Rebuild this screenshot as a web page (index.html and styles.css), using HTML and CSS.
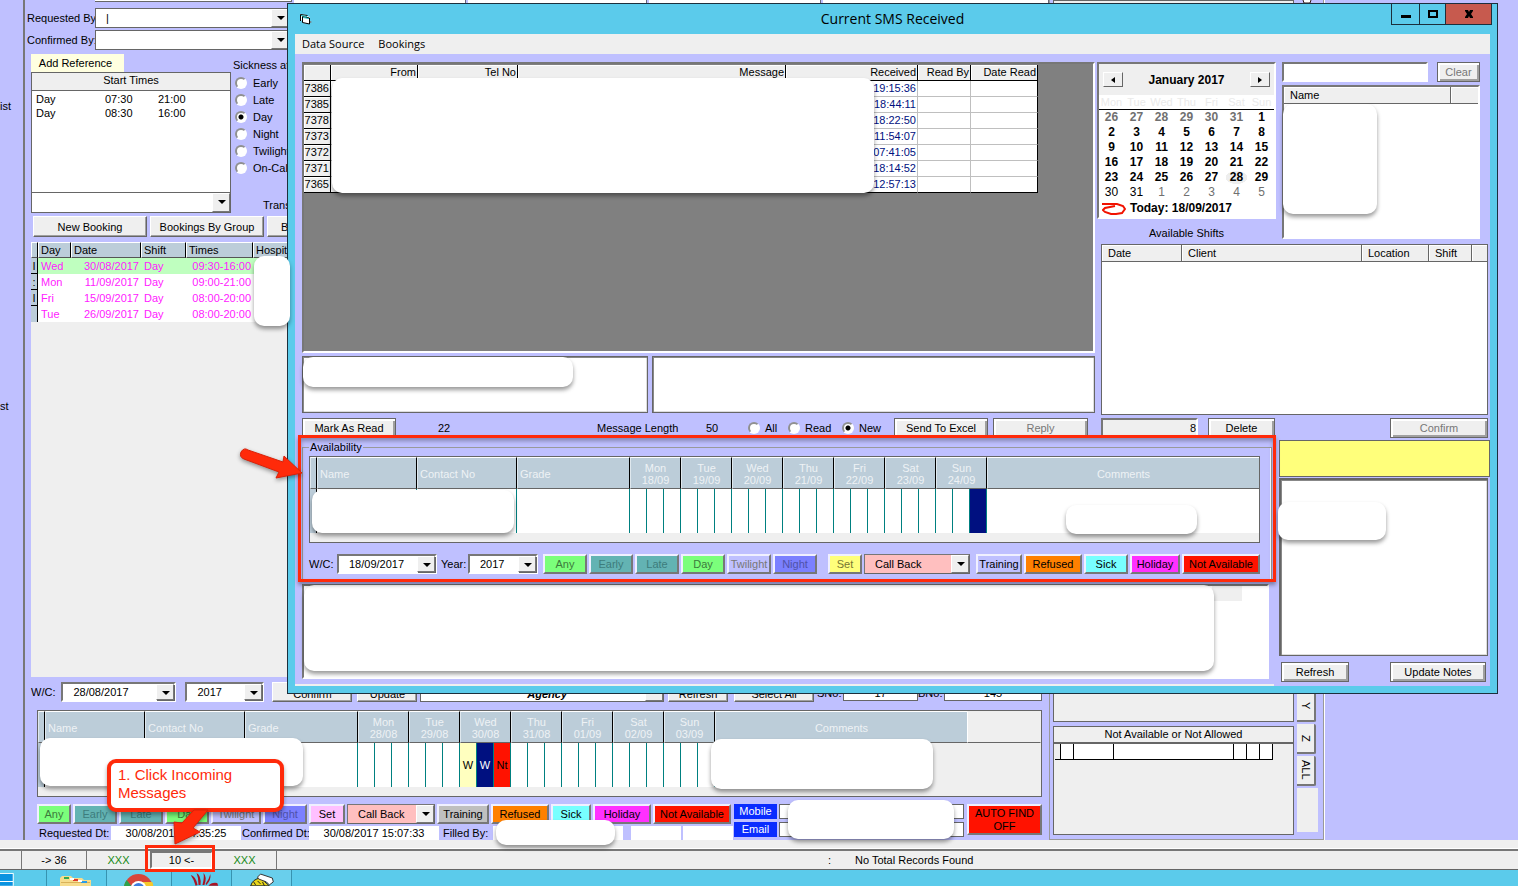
FILE: index.html
```html
<!DOCTYPE html>
<html lang="en">
<head>
<meta charset="utf-8">
<title>Current SMS Received</title>
<link rel="stylesheet" href="styles.css">
</head>
<body>
<div class="screen">
  <div class="workspace">
    <aside class="rail"><span class="rail-a">ist</span><span class="rail-b">st</span></aside>

    <main class="main">
      <div class="peek"><i class="peek-combo"></i><i class="pk1"></i><i class="pk2"></i><i class="pk1"></i><i class="pk3"></i></div>
      <div class="requests">
        <div class="field"><label for="reqby">Requested By</label><span class="combo"><select id="reqby"><option>|</option></select></span></div>
        <div class="field"><label for="confby">Confirmed By:</label><span class="combo"><select id="confby"><option></option></select></span></div>
        <div class="booking-setup">
          <div class="starts">
            <button class="add-ref">Add Reference</button>
            <div class="start-box">
              <div class="start-title">Start Times</div>
              <table class="start-list">
                <tr><td>Day</td><td>07:30</td><td>21:00</td></tr>
                <tr><td>Day</td><td>08:30</td><td>16:00</td></tr>
              </table>
              <span class="combo combo-flat"><select aria-label="Start time"><option></option></select></span>
            </div>
          </div>
          <div class="sickness">
            <span>Sickness at</span>
            <label><input type="radio" name="sick">Early</label>
            <label><input type="radio" name="sick">Late</label>
            <label><input type="radio" name="sick" checked>Day</label>
            <label><input type="radio" name="sick">Night</label>
            <label><input type="radio" name="sick">Twilight</label>
            <label><input type="radio" name="sick">On-Call</label>
            <span class="trans">Trans</span>
          </div>
        </div>
        <div class="booking-buttons">
          <button class="btn">New Booking</button><button class="btn">Bookings By Group</button><button class="btn lead">B</button>
        </div>
      </div>

      <div class="bookings">
        <table>
          <thead><tr><th class="c-mark"></th><th class="c-day">Day</th><th class="c-date">Date</th><th class="c-shift">Shift</th><th class="c-times">Times</th><th class="c-hosp">Hospit</th></tr></thead>
          <tbody>
            <tr class="current"><th>I</th><td>Wed</td><td class="num">30/08/2017</td><td>Day</td><td class="num">09:30-16:00</td><td></td></tr>
            <tr><th>:</th><td>Mon</td><td class="num">11/09/2017</td><td>Day</td><td class="num">09:00-21:00</td><td></td></tr>
            <tr><th>I</th><td>Fri</td><td class="num">15/09/2017</td><td>Day</td><td class="num">08:00-20:00</td><td></td></tr>
            <tr><th></th><td>Tue</td><td class="num">26/09/2017</td><td>Day</td><td class="num">08:00-20:00</td><td></td></tr>
          </tbody>
        </table>
      </div>

      <div class="filter-row">
        <label for="wc1">W/C:</label>
        <span class="combo combo-wc"><select id="wc1"><option>28/08/2017</option></select></span>
        <span class="combo combo-yr"><select aria-label="Year"><option>2017</option></select></span>
        <button class="btn w-80">Confirm</button>
        <button class="btn w-60">Update</button>
        <span class="combo combo-agency"><select aria-label="Agency"><option>Agency</option></select></span>
        <button class="btn w-60">Refresh</button>
        <button class="btn w-80">Select All</button>
        <label for="sno">SNo:</label><input class="flat-input" id="sno" value="17">
        <label for="bno">BNo:</label><input class="flat-input wide" id="bno" value="145">
      </div>

      <div class="avail avail-main">
        <table>
          <colgroup><col class="k-mark"><col class="k-name"><col class="k-name"><col class="k-grade"><col class="k-slot" span="21"><col class="k-comm"><col></colgroup>
          <thead><tr><th></th><th class="left">Name</th><th class="left">Contact No</th><th class="left">Grade</th>
            <th colspan="3">Mon<br>28/08</th><th colspan="3">Tue<br>29/08</th><th colspan="3">Wed<br>30/08</th><th colspan="3">Thu<br>31/08</th><th colspan="3">Fri<br>01/09</th><th colspan="3">Sat<br>02/09</th><th colspan="3">Sun<br>03/09</th><th class="comm">Comments</th><th class="blank"></th></tr></thead>
          <tbody><tr><td class="mark"></td><td></td><td></td><td></td>
            <td></td><td></td><td></td><td></td><td></td><td></td><td class="s-cream">W</td><td class="s-navy">W</td><td class="s-red">Nt</td><td></td><td></td><td></td><td></td><td></td><td></td><td></td><td></td><td></td><td></td><td></td><td></td><td class="off"></td><td class="off"></td></tr></tbody>
        </table>
        <div class="patch p-main-name"></div>
        <div class="patch p-main-comm"></div>
      </div>

      <div class="bottom">
        <div class="bottom-left">
          <div class="codes">
            <button class="code green w-34">Any</button><button class="code teal w-44">Early</button><button class="code teal w-44">Late</button><button class="code green w-44">Day</button><button class="code lilac w-50">Twilight</button><button class="code blue w-44">Night</button>
            <button class="code pink w-36">Set</button><span class="combo combo-pink"><select aria-label="Status"><option>Call Back</option></select></span>
            <button class="code grey w-52">Training</button><button class="code orange w-58">Refused</button><button class="code cyan w-40">Sick</button><button class="code magenta w-58">Holiday</button><button class="code red w-78">Not Available</button>
          </div>
          <div class="stamps">
            <span class="l1">Requested Dt:</span><output>30/08/2017 14:35:25</output><span class="l2">Confirmed Dt:</span><output>30/08/2017 15:07:33</output><span class="l3">Filled By:</span><output></output><output class="sm"></output><output class="sm"></output>
          </div>
          <div class="patch p-filled"></div>
        </div>
        <div class="contact">
          <label for="mob">Mobile</label><input id="mob"><label for="eml">Email</label><input id="eml">
          <div class="patch p-contact"></div>
        </div>
        <button class="code red autofind">AUTO FIND<br>OFF</button>
      </div>
    </main>

    <aside class="dock">
      <div class="dock-peek"></div>
      <div class="dock-panels">
        <div class="dock-top"></div>
        <div class="dock-na">
          <div class="dock-title">Not Available or Not Allowed</div>
          <table><tr><td class="n1"></td><td class="n2"></td><td class="n3"></td><td class="n4"></td><td class="n2"></td><td class="n2"></td><td class="n2"></td></tr></table>
        </div>
      </div>
      <div class="tabs">
        <svg class="tab-icon" viewBox="0 0 12 4" aria-hidden="true"><path d="M2 0 L3 3 L9 3 L10 0" fill="#fff" stroke="#301818"/></svg>
        <span class="tab-space"></span>
        <button>Y</button><button>Z</button><button>ALL</button><span class="tab-rest"></span>
      </div>
    </aside>
  </div>

  <div class="sill"></div>
  <footer class="statusbar">
    <span class="st0"></span><span class="st1">-&gt; 36</span><span class="st2 ok">XXX</span><button class="st3">10 &lt;-</button><span class="st2 ok">XXX</span><span class="st4"></span><span class="colon">:</span><span class="total">No Total Records Found</span>
  </footer>
  <nav class="taskbar">
    <button class="start" aria-label="Start"><svg viewBox="0 0 47 16"><path d="M0 3h14v13H0z" fill="#fff"/><path d="M0 4h13v7H0zM0 12h13v4H0z" fill="#0a93e0"/></svg></button>
    <button aria-label="Files"><svg viewBox="0 0 59 16"><path d="M13 8l2-2h9l2 2h9l2 2h7v6H13z" fill="#f6dc8c"/><path d="M14 12h29v1H14z" fill="#d9b25a"/><path d="M17 7h5v2h-5z" fill="#32a852"/><path d="M26 9h5v2h-5z" fill="#e23b2e"/><path d="M34 11h6v2h-6z" fill="#2a9be8"/><path d="M23 8h4v2h-4zM31 10h4v2h-4z" fill="#fff"/></svg></button>
    <button class="lit" aria-label="Browser"><svg viewBox="0 0 65 16"><circle cx="32" cy="19" r="15" fill="#d8453a"/><path d="M17 19a15 15 0 0 1 3-9l7 9z" fill="#2ca24c"/><path d="M33 12h13a15 15 0 0 1 1 7H33z" fill="#f5c92c"/><circle cx="32" cy="19" r="8" fill="#fff"/><circle cx="32" cy="19" r="6" fill="#3d7de0"/></svg></button>
    <button aria-label="Messaging"><svg viewBox="0 0 60 16"><g fill="#a81424"><path d="M19 5q5 1 7 10l-2 1q-2-7-5-11zM25 3q5 3 4 12h-2q0-7-2-12zM32 3q4 4 1 12h-2q2-7 1-12zM39 4q1 6-4 11l-1-1q4-5 5-10zM46 13q-6-1-9 3h10z"/></g></svg></button>
    <button class="lit" aria-label="Mascot"><svg viewBox="0 0 60 16"><path d="M19 16q2-7 10-8l9 8z" fill="#e8d61c" stroke="#222"/><path d="M26 7l3-3 12 4 1 4-4 3-3-3-8-3z" fill="#fff" stroke="#333"/><path d="M26 11l3 3M22 12l2 3M31 12l2 4" stroke="#222"/></svg></button>
  </nav>

  <section class="window" aria-label="Current SMS Received">
    <header class="titlebar">
      <svg class="app-icon" viewBox="0 0 13 12"><path d="M1 1l7 1v1l3 1v7l-7-1V8L1 7z" fill="#fff"/><path d="M1.500 8V1.500l7 1M3.500 9.500v-6l7 1.500v6l-7-1.500" fill="none" stroke="#000"/><path d="M2 2.500l6 1M4 4.500l6 1" stroke="#18b8b8"/><path d="M11 8l2 1-2 1z" fill="#777"/></svg>
      <h1>Current SMS Received</h1>
      <div class="win-buttons">
        <button aria-label="Minimize"><svg viewBox="0 0 12 12"><path d="M1 7h10v3H1z"/></svg></button>
        <button class="max" aria-label="Maximize"><svg viewBox="0 0 12 12"><path d="M1 2h10v8H1zM3 4v4h6V4z" fill-rule="evenodd"/></svg></button>
        <button class="close" aria-label="Close"><svg viewBox="0 0 12 12"><path d="M2 2h3l1 2 1-2h3v1L8 6l2 3v1H7L6 8l-1 2H2V9l2-3-2-3z"/></svg></button>
      </div>
    </header>
    <div class="client">
      <div class="menubar"><button>Data Source</button><button>Bookings</button></div>
      <div class="upper">
        <div class="messages">
          <div class="sms-grid">
            <table>
              <thead><tr><th class="m-id"></th><th class="m-from">From</th><th class="m-tel">Tel No</th><th class="m-msg">Message</th><th class="m-rec">Received</th><th class="m-by">Read By</th><th class="m-date">Date Read</th></tr></thead>
              <tbody>
                <tr><th>7386</th><td></td><td></td><td></td><td>19:15:36</td><td></td><td></td></tr>
                <tr><th>7385</th><td></td><td></td><td></td><td>18:44:11</td><td></td><td></td></tr>
                <tr><th>7378</th><td></td><td></td><td></td><td>18:22:50</td><td></td><td></td></tr>
                <tr><th>7373</th><td></td><td></td><td></td><td>11:54:07</td><td></td><td></td></tr>
                <tr><th>7372</th><td></td><td></td><td></td><td>07:41:05</td><td></td><td></td></tr>
                <tr><th>7371</th><td></td><td></td><td></td><td>18:14:52</td><td></td><td></td></tr>
                <tr><th>7365</th><td></td><td></td><td></td><td>12:57:13</td><td></td><td></td></tr>
              </tbody>
            </table>
            <div class="patch p-sms"></div>
          </div>
          <div class="texts">
            <div class="text-a"><textarea aria-label="Message"></textarea><div class="patch p-text"></div></div>
            <div class="text-b"><textarea aria-label="Reply text"></textarea></div>
          </div>
          <div class="msg-actions">
            <button class="btn">Mark As Read</button><span class="count">22</span><span>Message Length</span><span>50</span>
            <label><input type="radio" name="show">All</label><label><input type="radio" name="show">Read</label><label><input type="radio" name="show" checked>New</label>
            <button class="btn">Send To Excel</button><button class="btn reply" disabled>Reply</button>
          </div>
        </div>

        <div class="side">
          <div class="side-top">
            <div class="cal-col">
              <div class="calendar">
                <div class="cal-head"><button aria-label="Previous month"><svg viewBox="0 0 8 8"><path d="M6 1v6L2 4z"/></svg></button><span>January 2017</span><button aria-label="Next month"><svg viewBox="0 0 8 8"><path d="M2 1v6l4-3z"/></svg></button></div>
                <table>
                  <thead><tr><th>Mon</th><th>Tue</th><th>Wed</th><th>Thu</th><th>Fri</th><th>Sat</th><th>Sun</th></tr></thead>
                  <tbody>
                    <tr><td class="dim">26</td><td class="dim">27</td><td class="dim">28</td><td class="dim">29</td><td class="dim">30</td><td class="dim">31</td><td>1</td></tr>
                    <tr><td>2</td><td>3</td><td>4</td><td>5</td><td>6</td><td>7</td><td>8</td></tr>
                    <tr><td>9</td><td>10</td><td>11</td><td>12</td><td>13</td><td>14</td><td>15</td></tr>
                    <tr><td>16</td><td>17</td><td>18</td><td>19</td><td>20</td><td>21</td><td>22</td></tr>
                    <tr><td>23</td><td>24</td><td>25</td><td>26</td><td>27</td><td class="sel">28</td><td>29</td></tr>
                    <tr class="thin"><td>30</td><td>31</td><td class="dim">1</td><td class="dim">2</td><td class="dim">3</td><td class="dim">4</td><td class="dim">5</td></tr>
                  </tbody>
                </table>
                <div class="today"><svg viewBox="0 0 24 12"><path d="M0 1h15l6 2 2 3-3 4-6 1H9L3 9 1 7l2-2 5-1 5-1" fill="none" stroke="#f11200" stroke-width="2"/></svg>Today: 18/09/2017</div>
              </div>
              <div class="shifts-label">Available Shifts</div>
            </div>
            <div class="search">
              <div class="search-row"><input aria-label="Search name"><button class="btn" disabled>Clear</button></div>
              <div class="names"><div class="list-head"><span class="h-name">Name</span><span class="h-rest"></span></div><div class="patch p-names"></div></div>
            </div>
          </div>
          <div class="shifts"><div class="list-head"><span class="h-date">Date</span><span class="h-client">Client</span><span class="h-loc">Location</span><span class="h-shift">Shift</span><span class="h-end"></span></div></div>
          <div class="shift-actions"><input aria-label="Shift count" value="8" readonly><button class="btn">Delete</button><button class="btn confirm" disabled>Confirm</button></div>
        </div>
      </div>

      <div class="lower">
        <div class="lower-left">
          <fieldset>
            <legend>Availability</legend>
            <div class="avail">
              <table>
                <colgroup><col class="k-mark"><col class="k-name"><col class="k-name"><col class="k-grade"><col class="k-slot" span="21"><col></colgroup>
                <thead><tr><th></th><th class="left">Name</th><th class="left">Contact No</th><th class="left">Grade</th>
                  <th colspan="3">Mon<br>18/09</th><th colspan="3">Tue<br>19/09</th><th colspan="3">Wed<br>20/09</th><th colspan="3">Thu<br>21/09</th><th colspan="3">Fri<br>22/09</th><th colspan="3">Sat<br>23/09</th><th colspan="3">Sun<br>24/09</th><th class="comm">Comments</th></tr></thead>
                <tbody><tr><td class="mark"></td><td></td><td></td><td></td>
                  <td></td><td></td><td></td><td></td><td></td><td></td><td></td><td></td><td></td><td></td><td></td><td></td><td></td><td></td><td></td><td></td><td></td><td></td><td></td><td></td><td class="s-navy"></td><td class="comm"></td></tr></tbody>
              </table>
              <div class="patch p-av-name"></div>
              <div class="patch p-av-comm"></div>
            </div>
            <div class="codes codes-win">
              <label for="wc2">W/C:</label><span class="combo combo-100"><select id="wc2"><option>18/09/2017</option></select></span>
              <label for="yr2">Year:</label><span class="combo combo-70"><select id="yr2"><option>2017</option></select></span>
              <div class="code-group g-shift"><button class="code green w-44">Any</button><button class="code teal w-44">Early</button><button class="code teal w-44">Late</button><button class="code green w-44">Day</button><button class="code lilac w-44">Twilight</button><button class="code blue w-44">Night</button></div>
              <button class="code yellow w-34">Set</button><span class="combo combo-pink combo-106"><select aria-label="Status"><option>Call Back</option></select></span>
              <div class="code-group g-state"><button class="code lilac on w-46">Training</button><button class="code orange w-58">Refused</button><button class="code cyan w-44">Sick</button><button class="code magenta w-50">Holiday</button><button class="code red w-78">Not Available</button></div>
            </div>
          </fieldset>
          <div class="log"><i></i><div class="patch p-log"></div></div>
          <div class="edge"></div>
          <div class="mark-box"></div>
        </div>
        <div class="lower-right">
          <div class="notice"></div>
          <div class="notes"><textarea aria-label="Notes"></textarea><div class="patch p-notes"></div></div>
          <div class="note-actions"><button class="btn w-68">Refresh</button><button class="btn w-96">Update Notes</button></div>
        </div>
      </div>
    </div>
  </section>

  <div class="patch p-hosp"></div>
  <svg class="arrow-one" viewBox="0 0 68 38"><path d="M2 4Q5-1 9 2L44 14 45 8 63 25 37 30 40 24 5 11Q0 9 2 4z" fill="#ff2a0a" stroke="#d92008"/></svg>
  <div class="callout">1. Click Incoming<br>Messages</div>
  <svg class="arrow-two" viewBox="0 0 48 40"><path d="M24 2h14L23 20l7 4L5 36 4 14l8 1z" fill="#ff2a0a" stroke="#d92008"/></svg>
  <div class="mark-status"></div>
</div>
</body>
</html>
```
FILE: styles.css
```css
:root { --lav: #bfc0ff; --face: #efefef; --line: #666; --steel: #bccdd9; --sky: #5bcbeb; --red: #ff2a0a; }
* { box-sizing: border-box; }
body { margin: 0; font: 11px/16px "Liberation Sans", Arial, sans-serif; color: #000; background: var(--lav); }
button, input, select, textarea { font: inherit; color: inherit; border-radius: 0; margin: 0; }
button { padding: 0; white-space: nowrap; }
button:disabled { color: #777; }
table { border-collapse: separate; border-spacing: 0; table-layout: fixed; }
th, td { padding: 0; font-weight: normal; overflow: hidden; white-space: nowrap; }
i { display: block; }
.screen { position: relative; display: flex; flex-direction: column; min-height: 100vh; overflow: hidden; }
.workspace { flex: 1; display: flex; }

/* shared controls */
.btn { height: 20px; background: var(--face); border: 1px solid var(--line); box-shadow: inset 2px 2px #fff, inset -2px -2px #a0a0a0; }
.combo { position: relative; display: block; height: 20px; background: #fff; border: 2px solid; border-color: #777 #fff #fff #777; }
.combo::before { content: ""; position: absolute; right: 0; top: 0; bottom: 0; width: 16px; background: var(--face); border: 1px solid; border-color: #fff #777 #777 #fff; box-shadow: 1px 1px #666; pointer-events: none; }
.combo::after { content: ""; position: absolute; right: 4px; top: 7px; border: 4px solid transparent; border-top-color: #000; border-bottom: 0; pointer-events: none; }
.combo select { display: block; width: 100%; height: 100%; padding: 0 0 0 10px; appearance: none; border: 0; background: transparent; }
input[type=radio] { appearance: none; width: 12px; height: 12px; margin: 0 6px 0 0; border: 2px solid; border-color: #909090 #fff #fff #909090; border-radius: 50%; background: #fff; flex: none; }
input[type=radio]:checked { background: radial-gradient(circle, #000 2px, #fff 3px); }
.patch { position: absolute; background: #fff; border-radius: 10px; box-shadow: 0 3px 4px rgba(0,0,0,.4); }
.w-34 { width: 34px; } .w-36 { width: 36px; } .w-40 { width: 40px; } .w-44 { width: 44px; } .w-46 { width: 46px; }
.w-50 { width: 50px; } .w-52 { width: 52px; } .w-58 { width: 58px; } .w-60 { width: 60px; } .w-68 { width: 68px; }
.w-78 { width: 78px; } .w-80 { width: 80px; } .w-96 { width: 96px; }
.code { height: 20px; flex: none; border: 2px solid; border-color: #f0f0ff #777 #777 #f0f0ff; line-height: 15px; }
.green { background: #7bff7b; color: #3c7a3c; } .teal { background: #63b3b3; color: #3d7c7c; }
.lilac { background: var(--lav); color: #777; } .lilac.on { color: #000; }
.blue { background: #7b80ff; color: #4f52a8; } .pink { background: #ffc0ff; } .yellow { background: #ffff7b; color: #777733; }
.grey { background: #bfbfbf; } .orange { background: #ff8000; } .cyan { background: #78ffff; }
.magenta { background: #ff30ff; } .red { background: #ff1200; }

/* left rail and booking area */
.rail { width: 25px; flex: none; border-right: 2px solid #777; display: flex; flex-direction: column; }
.rail-a { margin-top: 98px; } .rail-b { margin-top: 284px; }
.main { flex: 1; min-width: 0; padding-left: 6px; display: flex; flex-direction: column; }
.peek { height: 3px; display: flex; gap: 2px; }
.peek i { background: #fff; border-right: 1px solid #667; }
.peek .peek-combo { flex: none; width: 197px; margin-left: 64px; height: 2px; border-bottom: 1px solid #666; }
.pk1 { flex: 172; } .pk2 { flex: 178; } .pk3 { flex: 226; }
.requests { width: 262px; padding-top: 5px; }
.field { display: flex; align-items: center; margin: 0 0 2px -4px; }
.field label { width: 68px; white-space: nowrap; }
.field .combo { flex: 1; margin-right: 3px; border-color: var(--line); border-width: 1px; }
.booking-setup { display: flex; padding-top: 2px; }
.starts { width: 200px; display: flex; flex-direction: column; }
.add-ref { width: 93px; height: 18px; border: 0; background: #ffffe0; padding-right: 4px; }
.start-box { height: 141px; border: 1px solid var(--line); background: #fff; display: flex; flex-direction: column; }
.start-title { height: 18px; background: var(--face); border-bottom: 1px solid var(--line); text-align: center; line-height: 14px; }
.start-list { margin: 1px 0 auto 4px; line-height: 14px; }
.start-list td:nth-child(1) { width: 69px; } .start-list td:nth-child(2) { width: 53px; }
.combo-flat { border: 0; border-top: 1px solid var(--line); }
.sickness { width: 62px; padding: 3px 0 0 2px; overflow: hidden; white-space: nowrap; display: flex; flex-direction: column; }
.sickness span + label { margin-top: 1px; }
.sickness label { height: 17px; display: flex; align-items: center; padding-left: 2px; }
.sickness .trans { padding: 21px 0 0 30px; }
.booking-buttons { display: flex; gap: 3px; padding: 3px 0 5px 2px; overflow: hidden; }
.booking-buttons .btn { width: 114px; height: 21px; flex: none; border-color: #fff var(--line) var(--line) #fff; box-shadow: inset -1px -1px #a0a0a0; }
.booking-buttons .lead { text-align: left; padding-left: 13px; }
.bookings { flex: 1; background: var(--face); margin-right: 7px; overflow: hidden; }
.bookings table { width: 262px; }
.bookings thead th { height: 16px; line-height: 14px; background: var(--steel); text-align: left; padding-left: 2px; border: 1px solid; border-color: #fff #000 #555 #fff; }
.c-mark { width: 7px; } .c-day { width: 33px; } .c-date { width: 70px; } .c-shift { width: 45px; } .c-times { width: 67px; }
.bookings tbody th { height: 16px; line-height: 14px; background: var(--steel); border-right: 1px solid #000; border-bottom: 1px solid #000; }
.bookings tbody tr:last-child th { border-bottom: 0; }
.bookings td { height: 16px; line-height: 16px; padding: 0 3px; color: #ff20ff; background: #fff; }
.bookings .current td { background: #bfffbf; }
.num { text-align: right; }
.bookings td.num { padding-right: 2px; }

.filter-row { display: flex; align-items: center; height: 33px; padding: 0 7px 4px 0; }
.filter-row label { white-space: nowrap; }
.filter-row .btn { margin: 0 3px; border-color: #fff var(--line) var(--line) #fff; box-shadow: inset -1px -1px #a0a0a0; padding-top: 3px; }
.filter-row .w-60 { margin: 0 3px 0 2px; }
.combo-wc { width: 115px; margin-left: 6px; } .combo-yr { width: 79px; margin: 0 5px 0 9px; }
.combo-agency { flex: 1; border-width: 1px; border-color: var(--line); margin-right: 2px; }
.combo-agency select { text-align-last: center; font-style: italic; font-weight: bold; padding-top: 3px; }
.filter-row [for=sno], .filter-row [for=bno] { width: 26px; padding-top: 3px; }
.flat-input { width: 75px; height: 18px; border: 1px solid var(--line); background: #fff; text-align: center; padding: 3px 0 0; }
.flat-input.wide { width: 98px; }

/* week availability grid */
.avail { position: relative; border: 1px solid var(--line); background: var(--face); padding-bottom: 9px; }
.avail-main { margin: 0 7px 0 6px; }
.avail table { width: 100%; }
.k-mark { width: 7px; } .k-name { width: 100px; } .k-grade { width: 113px; } .k-slot { width: 17px; } .k-comm { width: 252px; }
.avail th { height: 32px; padding: 1px 0 0; line-height: 12px; color: #eef2f5; background: var(--steel); border: 1px solid; border-color: #fff #000 var(--line) #dfe8ee; }
.avail th.left { text-align: left; padding-left: 2px; }
.avail th.comm { border-right: 0; }
.avail th.blank { background: var(--face); border-color: var(--face) var(--face) var(--line) #fff; }
.avail td { height: 44px; background: #fff; border-right: 1px solid #008080; text-align: center; }
.avail td.mark { background: var(--steel); border-right-color: #000; }
.avail td.off { background: var(--face); border: 0; } .avail td.comm { border: 0; }
.avail td.s-cream { background: #ffffbf; } .avail td.s-navy { background: #001080; color: #fff; } .avail td.s-red { background: #ff1200; }

.bottom { display: flex; padding: 7px 7px 0 6px; height: 43px; }
.bottom-left { position: relative; flex: 1; min-width: 0; display: flex; flex-direction: column; }
.codes { display: flex; gap: 2px; align-items: center; }
.combo-pink { width: 88px; flex: none; background: #ffbfbf; border-width: 1px; border-color: #777 #666 #666 #777; }
.stamps { display: flex; height: 14px; margin-top: 2px; line-height: 14px; white-space: nowrap; }
.stamps output { width: 130px; background: #fff; text-align: center; }
.stamps .sm { width: 50px; margin-left: 2px; }
.stamps .l3 + output { margin-right: 6px; }
.l1 { width: 74px; padding-left: 2px; } .l2 { width: 68px; padding-left: 1px; } .l3 { width: 54px; padding-left: 4px; }
.contact { position: relative; width: 230px; display: grid; grid-template-columns: 43px 1fr; gap: 3px 2px; grid-auto-rows: 15px; }
.contact label { background: #0a2cff; color: #fff; text-align: center; line-height: 15px; }
.contact input { min-width: 0; width: 100%; height: 15px; border: 1px solid var(--line); }
.autofind { width: 75px; height: 31px; margin-left: 3px; line-height: 13px; }

/* docked panels on the right */
.dock { position: relative; width: 275px; margin: 0 194px 0 0; border: 1px solid #999; border-top: 0; box-shadow: 1px 0 #fff; padding: 0 5px 4px 3px; display: grid; grid-template-columns: 1fr 21px; column-gap: 3px; grid-template-rows: 3px 1fr; }
.dock-peek { grid-column: 1 / 2; background: var(--face); }
.dock-panels { grid-row: 1 / 3; grid-column: 1; display: flex; flex-direction: column; gap: 4px; }
.dock-top { flex: 1; background: var(--face); border: 1px solid var(--line); }
.dock-na { height: 109px; background: var(--face); border: 1px solid var(--line); }
.dock-title { height: 17px; text-align: center; border-bottom: 2px solid var(--line); line-height: 15px; }
.dock-na table { margin-left: 1px; width: 218px; }
.dock-na td { height: 16px; background: #fff; border: solid #000; border-width: 0 1px 1px 0; }
.dock-na .n1 { width: 6px; background: var(--face); } .n2 { width: 13px; } .n3 { width: 40px; } .n4 { width: 120px; }
.tabs { grid-row: 1 / 3; grid-column: 2; display: flex; flex-direction: column; gap: 2px; padding-bottom: 3px; }
.tab-icon { width: 12px; height: 4px; margin-left: 4px; }
.tab-space { flex: 1; }
.tabs button { height: 30px; width: 19px; writing-mode: vertical-rl; background: var(--face); border: solid; border-width: 0 2px 2px 0; border-color: #777; border-radius: 0 2px 2px 0; text-align: center; }
.tab-rest { height: 44px; background: var(--face); }

/* status bar and taskbar */
.sill { height: 9px; background: var(--face); border-bottom: 1px solid #fff; }
.statusbar { height: 21px; display: flex; background: var(--face); border-top: 2px solid #777; border-bottom: 1px solid var(--line); line-height: 18px; }
.statusbar span { text-align: center; }
.st0 { width: 22px; border-right: 1px solid #777; } .st1 { width: 65px; border-right: 1px solid #777; } .st2 { width: 63px; }
.ok { color: #158a15; }
.st3 { width: 63px; background: var(--face); border: 2px solid; border-color: #777 #fff #fff #777; line-height: 14px; }
.st4 { width: 66px; border-left: 1px solid #777; }
.statusbar .colon { flex: 1; max-width: 513px; text-align: right; padding-right: 24px; }
.total { white-space: nowrap; }
.taskbar { height: 16px; background: var(--sky); display: flex; overflow: hidden; }
.taskbar button { height: 16px; width: 60px; border: 0; border-right: 1px solid #3793b0; background: transparent; }
.taskbar .start { width: 47px; } .taskbar .lit { background: #69cfec; } .taskbar .lit:nth-child(3) { width: 65px; }
.taskbar svg { display: block; width: 100%; height: 16px; }

/* SMS window */
.window { position: absolute; left: 287px; right: 20px; top: 3px; border: 1px solid #1c2f3c; background: var(--sky); padding: 0 7px 7px; }
.titlebar { position: relative; height: 30px; display: flex; align-items: center; justify-content: center; }
.titlebar h1 { margin: 0; font: 14px/20px "Open Sans", "Noto Sans", sans-serif; }
.app-icon { position: absolute; left: 4px; top: 9px; width: 13px; height: 12px; }
.win-buttons { position: absolute; right: -2px; top: 0; display: flex; }
.win-buttons button { width: 28px; height: 21px; background: var(--sky); border: 1px solid #1c2f3c; border-width: 0 0 1px 1px; }
.win-buttons .max { width: 26px; }
.win-buttons .close { width: 47px; background: #c75a4e; border-right-width: 1px; }
.win-buttons svg { width: 12px; height: 12px; display: block; margin: 0 auto; }
.client { background: var(--lav); }
.menubar { height: 20px; background: var(--face); display: flex; gap: 14px; padding-left: 7px; }
.menubar button { border: 0; background: none; font: 11px/20px "Open Sans", "Noto Sans", sans-serif; }
.upper { display: flex; gap: 2px; padding: 8px 2px 0 7px; }
.messages { flex: 1; min-width: 0; display: flex; flex-direction: column; }
.sms-grid { position: relative; flex: 1; background: #808080; border: 2px solid; border-color: #777 #fff #fff #777; margin-bottom: 3px; padding-top: 1px; }
.sms-grid table { width: 734px; }
.sms-grid th, .sms-grid td { height: 16px; line-height: 15px; text-align: right; padding-right: 1px; border: solid #bfbfbf; border-width: 0 1px 1px 0; background: #fff; color: #001080; }
.sms-grid th { background: var(--face); color: #000; border-color: #000; box-shadow: inset 1px 1px #fff; }
.sms-grid td:last-child { border-right-color: #000; } .sms-grid tbody tr:last-child td { border-bottom-color: #000; }
.m-id { width: 27px; } .m-from { width: 87px; } .m-tel { width: 100px; } .m-msg { width: 268px; } .m-rec { width: 132px; } .m-by { width: 53px; }
.texts { display: flex; gap: 4px; height: 57px; }
.text-a { position: relative; width: 346px; } .text-b { flex: 1; }
textarea { display: block; width: 100%; height: 100%; resize: none; border: 1px solid var(--line); box-shadow: inset 1px 1px #888, inset -1px -1px #ddd; background: #fff; }
.msg-actions { display: grid; grid-template-columns: 94px 1fr 109px 42px 40px 54px 52px 94px 100px; align-items: center; height: 20px; margin-top: 5px; padding-right: 7px; white-space: nowrap; }
.msg-actions label { display: flex; align-items: center; }
.msg-actions input { margin-right: 5px; }
.count { padding-left: 42px; } .reply { margin: 0 0 0 5px; width: 95px; }
.side { width: 391px; flex: none; }
.side-top { display: flex; gap: 6px; }
.cal-col { width: 179px; }
.calendar { height: 157px; background: #fff; border: 2px solid; border-color: #777 #fff #fff #777; font-size: 12px; font-weight: bold; }
.cal-head { height: 31px; background: var(--face); display: flex; justify-content: space-between; align-items: center; padding: 0 4px; line-height: 30px; }
.cal-head button { width: 20px; height: 15px; background: var(--face); border: 1px solid; border-color: #fff #666 #666 #fff; }
.cal-head svg { display: block; width: 8px; height: 8px; margin: 0 auto; }
.calendar table { width: 175px; text-align: center; }
.calendar th { height: 15px; line-height: 14px; font-size: 11px; color: #eaeaea; border-bottom: 1px solid #000; }
.calendar td { height: 15px; line-height: 15px; font-weight: bold; }
.calendar .dim { color: #707070; } .calendar .thin td { font-weight: normal; }
.calendar .sel { background: radial-gradient(ellipse, #eee 60%, #fff 62%); }
.today { display: flex; align-items: center; gap: 4px; line-height: 17px; padding-left: 3px; }
.today svg { width: 24px; height: 12px; }
.shifts-label { text-align: center; padding-top: 6px; }
.search { width: 198px; display: flex; flex-direction: column; gap: 3px; height: 177px; }
.search-row { display: flex; justify-content: space-between; }
.search-row input { width: 146px; height: 20px; border: 2px solid; border-color: #777 #fff #fff #777; }
.search-row .btn { width: 43px; }
.names { position: relative; flex: 1; background: #fff; border: 2px solid; border-color: #777 #fff #fff #777; }
.list-head { display: flex; height: 17px; background: var(--face); border-bottom: 1px solid var(--line); line-height: 17px; }
.list-head span { border-right: 1px solid var(--line); box-shadow: inset 1px 1px #fff; padding-left: 6px; }
.list-head span:last-child { border: 0; }
.h-name { width: 167px; } .h-rest { flex: 1; }
.shifts { height: 171px; margin: 3px 0 3px 4px; background: #fff; border: 1px solid var(--line); }
.h-date { width: 80px; } .h-client { flex: 1; } .h-loc { width: 67px; } .h-shift { width: 43px; } .h-end { width: 15px; }
.shift-actions { display: flex; padding-left: 4px; }
.shift-actions input { width: 97px; height: 20px; background: var(--face); border: 2px solid; border-color: #777 #fff #fff #777; text-align: right; padding: 0; margin-right: 10px; }
.shift-actions .btn { width: 67px; } .shift-actions .confirm { width: 98px; margin-left: auto; }

.lower { display: flex; gap: 5px; }
.lower-left { position: relative; flex: 1; min-width: 0; }
fieldset { margin: 0 2px 0 7px; padding: 0 11px 5px 6px; min-width: 0; border: 1px solid #999; box-shadow: inset -1px 0 #fff; }
legend { padding: 0 1px; height: 18px; line-height: 18px; }
.lower .avail { margin-bottom: 11px; }
.codes-win { gap: 0; }
.codes-win label { width: 28px; flex: none; } .combo-100 { width: 100px; margin-right: 4px; } .combo-70 { width: 70px; margin-right: 5px; } .combo-106 { width: 106px; margin-left: 2px; }
.codes-win [for=yr2] { width: 27px; }
.code-group { display: flex; gap: 2px; } .g-shift { flex: 1; } .g-state { margin-left: 6px; }
.log { position: relative; height: 95px; margin: 4px 5px 5px 7px; background: #fff; border: 2px solid; border-color: #777 #fff #fff #777; }
.log i { width: 30px; height: 15px; margin: 0 25px 0 auto; background: var(--face); }
.edge { height: 2px; background: var(--face); }
.mark-box { position: absolute; left: 3px; right: -2px; top: -3px; height: 147px; border: 3px solid var(--red); box-shadow: 0 3px 4px rgba(0,0,0,.35), inset 0 3px 4px rgba(0,0,0,.3); }
.lower-right { width: 211px; flex: none; padding-top: 2px; }
.notice { height: 37px; background: #ffff7b; border: 1px solid var(--line); }
.notes { position: relative; height: 178px; margin: 1px 2px 0 0; }
.notes textarea { border-width: 2px 1px 1px 2px; }
.note-actions { display: flex; justify-content: space-between; padding: 6px 4px 0 2px; }

/* blanked-out details */
.p-sms { left: 28px; top: 14px; width: 542px; height: 115px; }
.p-text { left: 1px; top: 1px; width: 270px; height: 30px; }
.p-names { left: -1px; top: 17px; width: 94px; height: 110px; }
.p-av-name { left: 2px; top: 33px; width: 202px; height: 43px; }
.p-av-comm { right: 62px; top: 48px; width: 131px; height: 29px; }
.p-log { left: 0; top: -1px; right: 53px; height: 86px; }
.p-notes { left: -1px; top: 24px; width: 108px; height: 38px; }
.p-hosp { left: 254px; top: 256px; width: 36px; height: 70px; }
.p-main-name { left: 2px; top: 27px; width: 263px; height: 48px; }
.p-main-comm { left: 673px; top: 28px; width: 222px; height: 50px; }
.p-filled { left: 459px; top: 16px; width: 119px; height: 25px; }
.p-contact { left: 54px; top: -4px; width: 166px; height: 39px; }

/* annotations */
.arrow-one { position: absolute; left: 239px; top: 448px; width: 68px; height: 38px; filter: drop-shadow(0 2px 2px rgba(0,0,0,.4)); }
.callout { position: absolute; left: 107px; bottom: 74px; width: 177px; height: 53px; padding: 3px 7px; background: #fff; border: 4px solid var(--red); border-radius: 9px; color: var(--red); font-size: 15px; line-height: 18px; white-space: nowrap; box-shadow: 0 3px 4px rgba(0,0,0,.35); }
.arrow-two { position: absolute; left: 170px; bottom: 38px; width: 48px; height: 40px; filter: drop-shadow(0 2px 2px rgba(0,0,0,.4)); }
.mark-status { position: absolute; left: 145px; bottom: 14px; width: 70px; height: 27px; border: 3px solid var(--red); }
```
